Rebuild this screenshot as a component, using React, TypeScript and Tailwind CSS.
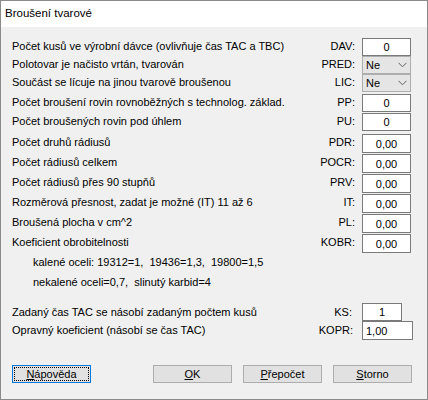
import React from 'react';

type Row = {
	label: string;
	code: string;
	kind: 'input' | 'select';
	value: string;
	mt: string;
	h: string;
};

const rows: Row[] = [
	{ label: 'Počet kusů ve výrobní dávce (ovlivňuje čas TAC a TBC)', code: 'DAV:', kind: 'input', value: '0', mt: 'mt-[11px]', h: 'h-[18px]' },
	{ label: 'Polotovar je načisto vrtán, tvarován', code: 'PRED:', kind: 'select', value: 'Ne', mt: 'mt-0', h: 'h-[18px]' },
	{ label: 'Součást se lícuje na jinou tvarově broušenou', code: 'LIC:', kind: 'select', value: 'Ne', mt: 'mt-0', h: 'h-[18px]' },
	{ label: 'Počet broušení rovin rovnoběžných s technolog. základ.', code: 'PP:', kind: 'input', value: '0', mt: 'mt-[2px]', h: 'h-[18px]' },
	{ label: 'Počet broušených rovin pod úhlem', code: 'PU:', kind: 'input', value: '0', mt: 'mt-[1px]', h: 'h-[18px]' },
	{ label: 'Počet druhů rádiusů', code: 'PDR:', kind: 'input', value: '0,00', mt: 'mt-[3px]', h: 'h-[19px]' },
	{ label: 'Počet rádiusů celkem', code: 'POCR:', kind: 'input', value: '0,00', mt: 'mt-[1px]', h: 'h-[19px]' },
	{ label: 'Počet rádiusů přes 90 stupňů', code: 'PRV:', kind: 'input', value: '0,00', mt: 'mt-[1px]', h: 'h-[19px]' },
	{ label: 'Rozměrová přesnost, zadat je možné (IT) 11 až 6', code: 'IT:', kind: 'input', value: '0,00', mt: 'mt-[1px]', h: 'h-[19px]' },
	{ label: 'Broušená plocha v cm^2', code: 'PL:', kind: 'input', value: '0,00', mt: 'mt-[1px]', h: 'h-[19px]' },
	{ label: 'Koeficient obrobitelnosti', code: 'KOBR:', kind: 'input', value: '0,00', mt: 'mt-[1px]', h: 'h-[19px]' },
];

function Chevron() {
	return (
		<svg width="9" height="6" viewBox="0 0 9 6" className="shrink-0">
			<path d="M0.5 0.8 L4.5 4.8 L8.5 0.8" fill="none" stroke="#606060" strokeWidth="1" />
		</svg>
	);
}

function Field({ kind, value, h }: { kind: Row['kind']; value: string; h: string }) {
	if (kind === 'select') {
		return (
			<div className={`${h} w-[49px] flex items-center justify-between pl-[3px] pr-[3px] bg-[#e5e5e5] border border-[#adadad]`}>
				<span>{value}</span>
				<Chevron />
			</div>
		);
	}
	return <div className={`${h} w-[49px] flex items-center justify-center bg-white border border-[#7a7a7a] pt-[1px]`}>{value}</div>;
}

function DialogButton({ children, focused }: { children: React.ReactNode; focused?: boolean }) {
	return (
		<div
			className={`h-[18px] w-[79px] flex items-center justify-center bg-[#e1e1e1] border ${focused ? 'border-[#0078d7]' : 'border-[#adadad]'}`}
		>
			<div className={`w-full h-full flex items-center justify-center ${focused ? 'outline outline-1 outline-dotted outline-black -outline-offset-2' : ''}`}>
				{children}
			</div>
		</div>
	);
}

export default function App() {
	return (
		<div className="w-[428px] h-[400px] flex flex-col border border-[#8a8a8a] text-[11px] text-black font-['Liberation_Sans',Arial,sans-serif] leading-none">
			{/* Title bar */}
			<div className="h-[26px] shrink-0 bg-white flex items-center pl-[4px] text-[11.5px]">Broušení tvarové</div>

			{/* Body */}
			<div className="flex-1 bg-[#f0f0f0] flex flex-col">
				{rows.map((r) => (
					<div key={r.code} className={`flex items-center ${r.mt}`}>
						<div className="flex-1 flex items-center justify-between pl-[11px] pr-[7px] pb-[2px]">
							<span className="whitespace-nowrap">{r.label}</span>
							<span>{r.code}</span>
						</div>
						<div className="w-[65px]">
							<Field kind={r.kind} value={r.value} h={r.h} />
						</div>
					</div>
				))}

				<div className="h-[19px] flex items-center pl-[32px] whitespace-pre">kalené oceli: 19312=1,  19436=1,3,  19800=1,5</div>
				<div className="h-[20px] flex items-center pl-[32px] whitespace-pre">nekalené oceli=0,7,  slinutý karbid=4</div>

				<div className="flex items-center mt-[11px]">
					<div className="flex-1 flex items-center justify-between pl-[11px] pr-[10px]">
						<span className="whitespace-nowrap">Zadaný čas TAC se násobí zadaným počtem kusů</span>
						<span>KS:</span>
					</div>
					<div className="w-[65px]">
						<div className="h-[18px] w-[40px] flex items-center justify-center bg-white border border-[#7a7a7a] pt-[1px]">1</div>
					</div>
				</div>
				<div className="flex items-center">
					<div className="flex-1 flex items-center justify-between pl-[11px] pr-[9px]">
						<span className="whitespace-nowrap">Opravný koeficient (násobí se čas TAC)</span>
						<span>KOPR:</span>
					</div>
					<div className="w-[65px]">
						<div className="h-[19px] w-[51px] flex items-center pl-[3px] bg-white border border-[#7a7a7a] pt-[1px]">1,00</div>
					</div>
				</div>

				{/* Buttons */}
				<div className="flex items-center mt-[25px] pl-[11px]">
					<DialogButton focused>
						<span>
							<span className="underline">N</span>ápověda
						</span>
					</DialogButton>
					<div className="ml-[62px] flex gap-[11px]">
						<DialogButton>
							<span>
								<span className="underline">O</span>K
							</span>
						</DialogButton>
						<DialogButton>
							<span>
								<span className="underline">P</span>řepočet
							</span>
						</DialogButton>
						<DialogButton>
							<span>
								<span className="underline">S</span>torno
							</span>
						</DialogButton>
					</div>
				</div>
			</div>
		</div>
	);
}
